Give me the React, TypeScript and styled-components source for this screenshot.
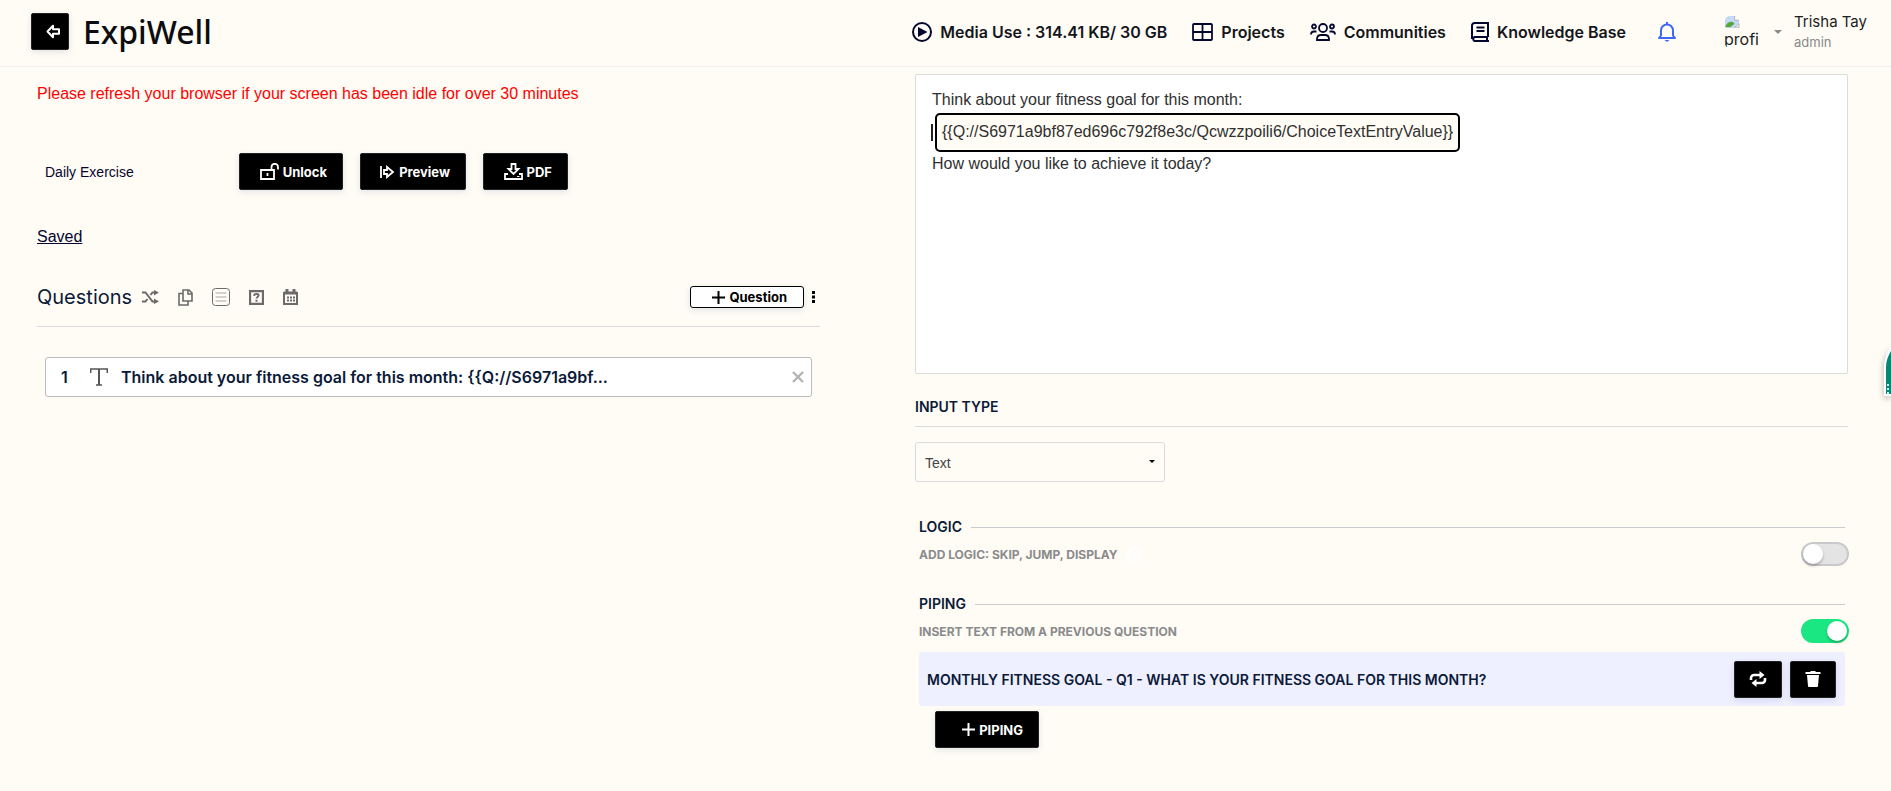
import React, { useState } from "react";
import styled, { createGlobalStyle } from "styled-components";

const sans = `Inter, "Liberation Sans", sans-serif`;
const arial = `"Liberation Sans", Arial, sans-serif`;
const navy = "#0b1a38";
const cream = "#fffcf5";
const line = "#d9dbdd";

const GlobalStyle = createGlobalStyle`
  * { box-sizing: border-box; }
  body { margin: 0; background: ${cream}; color: ${navy}; font-family: ${sans}; }
  button, select, input { font: inherit; }
  p, h1, h2, ol { margin: 0; padding: 0; }
`;

const Header = styled.header`
  display: flex;
  align-items: center;
  justify-content: space-between;
  height: 67px;
  padding: 0 24px 3px 31px;
  border-bottom: 1px solid #f1f1f4;
`;

const Brand = styled.div`
  display: flex;
  align-items: center;
  gap: 14px;
`;

const Logo = styled.h1`
  color: #0b0d10;
  font: 500 32px/36px "Noto Sans", "Open Sans", sans-serif;
`;

const DarkButton = styled.button<{ $width?: number }>`
  display: inline-flex;
  align-items: center;
  justify-content: flex-end;
  gap: 4px;
  width: ${(p) => (p.$width ? `${p.$width}px` : "auto")};
  height: 37px;
  padding: 0 15px;
  border: 1px solid #222;
  border-radius: 2px;
  background: #000;
  color: #fff;
  font-size: 13px;
  font-weight: 700;
  white-space: nowrap;
  box-shadow: 0 2px 6px rgba(60, 80, 140, 0.14);
  cursor: pointer;
`;

const BackButton = styled(DarkButton)`
  width: 38px;
  padding: 0 7px;
`;

const SquareButton = styled(DarkButton)`
  justify-content: center;
  padding: 0;
`;

const Nav = styled.nav`
  display: flex;
  align-items: center;
  gap: 25px;
`;

const NavLink = styled.a`
  display: flex;
  align-items: center;
  gap: 8px;
  color: #14161c;
  font-size: 16px;
  font-weight: 600;
  line-height: 20px;
  text-decoration: none;
  white-space: nowrap;

  svg { color: #04082e; }
`;

const BellButton = styled.button`
  display: flex;
  padding: 0;
  margin: 0 23px 0 7px;
  border: 0;
  background: none;
  color: #3f66fb;
  cursor: pointer;
`;

const Profile = styled.button`
  display: flex;
  align-items: center;
  gap: 12px;
  padding: 0;
  border: 0;
  background: none;
  color: #1c1e22;
  text-align: left;
  cursor: pointer;
`;

const Avatar = styled.span`
  display: flex;
  flex-direction: column;
  width: 38px;
  height: 34px;
  overflow: hidden;
  border-radius: 8px;
  font-size: 16px;
  line-height: 20px;
`;

const ProfileText = styled.span`
  display: flex;
  flex-direction: column;
  font-size: 15px;
  line-height: 20px;

  small { color: #888a8c; font-size: 13px; }
`;

const Main = styled.main`
  display: grid;
  grid-template-columns: minmax(0, 783fr) minmax(0, 933fr);
  column-gap: 95px;
  padding: 7px 43px 40px 37px;
`;

const Warning = styled.p`
  padding-top: 10px;
  color: #f00;
  font: 16px/20px ${arial};
`;

const Actions = styled.div`
  display: flex;
  align-items: center;
  gap: 17px;
  margin-top: 49px;
  padding-left: 8px;
`;

const SurveyName = styled.span`
  width: 177px;
  color: #05052e;
  font: 14px/18px ${arial};
`;

const Saved = styled.a`
  display: inline-block;
  margin-top: 37px;
  color: #05052e;
  font: 16px/20px ${arial};
`;

const QuestionsBar = styled.div`
  display: flex;
  align-items: center;
  margin-top: 33px;
  padding: 0 4px 12px 0;
  border-bottom: 1px solid ${line};
`;

const Heading = styled.h2`
  margin-right: 10px;
  font-size: 20px;
  font-weight: 400;
  line-height: 34px;
`;

const ToolIcons = styled.div`
  display: flex;
  align-items: center;
  gap: 19px;
  margin-right: auto;
`;

const IconButton = styled.button<{ $color?: string }>`
  display: flex;
  padding: 0;
  border: 0;
  background: none;
  color: ${(p) => p.$color ?? "#6b6b6b"};
  cursor: pointer;
`;

const AddQuestion = styled.button`
  display: flex;
  align-items: center;
  justify-content: flex-end;
  gap: 4px;
  width: 114px;
  height: 22px;
  margin-right: 7px;
  padding: 0 16px;
  border: 1px solid #000;
  border-radius: 3px;
  background: #fff;
  color: #000;
  font-size: 13px;
  font-weight: 700;
  box-shadow: 0 2px 6px rgba(60, 80, 140, 0.14);
  cursor: pointer;
`;

const QuestionList = styled.ol`
  margin: 30px 8px 0;
  list-style: none;
`;

const QuestionItem = styled.li`
  display: flex;
  align-items: center;
  height: 40px;
  padding: 0 7px 0 15px;
  border: 1px solid #b9bbbf;
  border-radius: 3px;
  background: #fff;
  font-size: 16px;
  font-weight: 600;
`;

const QuestionNumber = styled.span`
  width: 29px;
`;

const QuestionTitle = styled.span`
  flex: 1;
  margin-left: 13px;
  overflow: hidden;
  white-space: nowrap;
`;

const Editor = styled.div`
  min-height: 300px;
  padding: 14px 16px;
  border: 1px solid ${line};
  border-radius: 2px;
  background: #fff;
  color: #303030;
  font: 16px/22px ${arial};
  outline: 0;
`;

const TokenLine = styled.p`
  display: flex;
  align-items: center;
  gap: 2px;
  margin: 2px 0 1px -1px;
`;

const Caret = styled.span`
  width: 2px;
  height: 17px;
  background: #222;
`;

const Token = styled.span`
  overflow: hidden;
  padding: 6px 5px 7px;
  border: 2px solid #000;
  border-radius: 5px;
  background: ${cream};
`;

const InputTypeLabel = styled.label`
  display: block;
  padding: 22px 0 8px;
  border-bottom: 1px solid ${line};
  font-size: 14px;
  font-weight: 600;
  line-height: 22px;
`;

const SelectBox = styled.div`
  position: relative;
  width: 250px;
  margin: 15px 0 35px;

  svg { position: absolute; right: 10px; top: 18px; pointer-events: none; }
`;

const Select = styled.select`
  width: 100%;
  height: 40px;
  padding: 2px 9px 0;
  border: 1px solid ${line};
  border-radius: 3px;
  background: transparent;
  color: #444;
  font: 14px ${arial};
  appearance: none;
`;

const Section = styled.fieldset`
  min-width: 0;
  margin: 0 3px 28px 4px;
  padding: 0;
  border: 0;
`;

const SectionTitle = styled.h2`
  display: flex;
  align-items: center;
  gap: 9px;
  font-size: 14px;
  font-weight: 600;
  line-height: 20px;

  &::after { content: ""; flex: 1; height: 1px; background: #c9cbce; }
`;

const SectionRow = styled.div`
  display: flex;
  align-items: center;
  gap: 8px;
  height: 24px;
  margin: 5px -4px 0 0;
  color: #8a8b8c;
  font-size: 12px;
  font-weight: 700;
`;

const Toggle = styled.input`
  width: 48px;
  height: 24px;
  margin: 0 0 0 auto;
  border: 2px solid #c9c9c9;
  border-radius: 12px;
  background: #e4e4e4;
  appearance: none;
  cursor: pointer;

  &::before {
    content: "";
    display: block;
    width: 20px;
    height: 20px;
    border-radius: 50%;
    background: #fff;
    box-shadow: 0 2px 3px rgba(0, 0, 0, 0.25);
  }
  &:checked { border-color: #1be782; background: #1be782; }
  &:checked::before { margin-left: 24px; }
`;

const PipeRow = styled.div`
  display: flex;
  align-items: center;
  gap: 8px;
  height: 54px;
  margin-top: 9px;
  padding: 0 9px 0 8px;
  border-radius: 3px;
  background: #eeefff;
  font-size: 14px;
  font-weight: 600;

  span { flex: 1; }
`;

const PipeFooter = styled.div`
  margin-top: 5px;
  padding-left: 16px;
`;

const SideTab = styled.button`
  position: fixed;
  right: 0;
  top: 346px;
  display: flex;
  padding: 0;
  border: 0;
  background: none;
  filter: drop-shadow(0 2px 3px rgba(0, 0, 0, 0.3));
  cursor: pointer;
`;

type IconProps = { w?: number; h?: number; box?: string; sw?: number; children: React.ReactNode };
const Icon = ({ w = 20, h = w, box = "0 0 20 20", sw = 2, children }: IconProps) => (
  <svg width={w} height={h} viewBox={box} fill="none" stroke="currentColor" strokeWidth={sw} aria-hidden="true">
    {children}
  </svg>
);

const BackIcon = () => (
  <Icon w={15} box="0 0 15 15">
    <path d="M1.5 7.5 7 1.8v3.4h6v4.6H7v3.4z" strokeLinejoin="round" />
  </Icon>
);
const UnlockIcon = () => (
  <Icon w={19} h={17} box="0 0 19 17" sw={1.8}>
    <path d="M1 7h13v9H1zM11.500 7V4a3 3 0 0 1 6.500 0v2.500M7.500 10v3" />
  </Icon>
);
const PreviewIcon = () => (
  <Icon w={15} h={14} box="0 0 15 14" sw={1.8}>
    <path d="M1 1v12M4 5v4h3v3l6-5-6-5v3z" />
  </Icon>
);
const DownloadIcon = () => (
  <Icon w={19} h={17} box="0 0 19 17" sw={1.8}>
    <path d="M7.500 1h4v5h3l-5 5-5-5h3zM4 11H1v5h17v-5h-3" />
    <path d="M13 13.500h2.500" strokeWidth={1} />
  </Icon>
);
const PlusIcon = () => (
  <Icon w={13} box="0 0 13 13">
    <path d="M6.500 0v13M0 6.500h13" />
  </Icon>
);
const PlayIcon = () => (
  <Icon w={20}>
    <circle cx="10" cy="10" r="9" />
    <path d="m6 5 9.500 5L6 15z" fill="currentColor" stroke="none" />
  </Icon>
);
const GridIcon = () => (
  <Icon w={21} h={18} box="0 0 21 18" sw={1.8}>
    <rect x="1" y="1" width="19" height="16" rx="1" />
    <path d="M10.500 1v16M1 9h19" />
  </Icon>
);
const PeopleIcon = () => (
  <Icon w={26} h={18} box="0 0 26 18" sw={1.8}>
    <circle cx="13" cy="5" r="4" />
    <circle cx="4" cy="3.500" r="2" />
    <circle cx="22" cy="3.500" r="2" />
    <path d="M7 17v-1.500a4 4 0 0 1 4-3.500h4a4 4 0 0 1 4 3.500V17zM1 11.500C1 9.500 2 8.500 4 8.500h2.500M25 11.500c0-2-1-3-3-3h-2.500" />
  </Icon>
);
const BookIcon = () => (
  <Icon w={18} h={20} box="0 0 18 20">
    <path d="M17 15H3.500a2.200 2.200 0 0 0 0 4H18M1 17V3.500A2.500 2.500 0 0 1 3.500 1H17v14M16 15v4M5.500 5.500h8M5.500 9h8" />
  </Icon>
);
const BellIcon = () => (
  <Icon w={18} h={20} box="0 0 18 20">
    <path d="M1 16h16l-2-2.500V8.500a6 6 0 0 0-12 0v5zM9 0v3" strokeLinejoin="round" />
    <path d="M6.500 18h5L9 20z" fill="currentColor" stroke="none" />
  </Icon>
);
const BrokenImageIcon = () => (
  <svg width="16" height="16" viewBox="0 0 16 16" aria-hidden="true">
    <path d="M0 14V6a5 5 0 0 1 5-5h6l5 5v4l-6 5z" fill="#c6d9f8" />
    <path d="M0 14c2-5 5-7 9-6l2 2-5 4z" fill="#55a83c" />
    <path d="M11 1v5h5M16 10v4h-5z" fill="#fff" stroke="#a9a9a9" />
  </svg>
);
const CaretDown = ({ w = 8, color = "#8a8a8a" }: { w?: number; color?: string }) => (
  <svg width={w} height={w / 2} viewBox="0 0 8 4" aria-hidden="true">
    <path d="M0 0h8L4 4z" fill={color} />
  </svg>
);
const ShuffleIcon = () => (
  <Icon w={17} h={14} box="0 0 17 14">
    <path d="M0 2.500h3.500l7 9H13M0 11.500h3.500L5.500 9M8.500 5l2-2.500H13" />
    <path d="m12 0 5 2.500-5 3zM12 8.500l5 3-5 2.500z" fill="currentColor" stroke="none" />
  </Icon>
);
const CopyIcon = () => (
  <Icon w={15} h={17} box="0 0 15 17">
    <path d="M5 1h6l3 3v8H5zM10 1v4h4M5 4.500H1V16h9v-3.500" strokeWidth={1.6} />
  </Icon>
);
const ListIcon = () => (
  <Icon w={18} box="0 0 18 18" sw={1}>
    <rect x="0.500" y="0.500" width="17" height="17" rx="3" />
    <path d="M4 5h10M4 9h10M4 13h10" stroke="#a5a5a5" strokeLinecap="round" />
  </Icon>
);
const HelpIcon = () => (
  <Icon w={15} box="0 0 14 14">
    <path d="M1 1h12v12H1z" />
    <path d="M5 5.500V4.500c0-1 4-1.500 4 .5C9 6.500 7 6.500 7 8M7 9.200V11" strokeWidth={1.8} />
  </Icon>
);
const CalendarIcon = () => (
  <Icon w={15} h={16} box="0 0 15 16">
    <path d="M1 4v11h13V4z" />
    <path d="M1 4h13M4 0v4M11 0v4" strokeWidth={3} />
    <path d="M4 8.500h8M4 11.500h8" strokeDasharray="2 1" />
  </Icon>
);
const DotsIcon = () => (
  <svg width="5" height="12" viewBox="0 0 5 12" fill="currentColor" aria-hidden="true">
    <path d="M1 0h3v3H1zM1 4.500h3v3H1zM1 9h3v3H1z" />
  </svg>
);
const TextIcon = () => (
  <svg width="18" height="18" viewBox="0 0 18 18" fill="none" stroke="#555" aria-hidden="true">
    <path d="M.7 5V1h16.600v4M6 17h6" strokeWidth={1.500} />
    <path d="M9 1v16" strokeWidth={2} />
  </svg>
);
const CloseIcon = () => (
  <Icon w={12} box="0 0 12 12" sw={2.4}>
    <path d="m1 1 10 10M11 1 1 11" />
  </Icon>
);
const InfoIcon = () => (
  <svg width="16" height="16" viewBox="0 0 16 16" aria-hidden="true">
    <circle cx="8" cy="8" r="8" fill="#fffefc" />
    <path d="M6 6.500c0-2.500 4-2.500 4 0 0 1.500-2 1.500-2 3M8 11v1.500" fill="none" stroke="#fffbf2" strokeWidth="1.500" />
  </svg>
);
const SwapIcon = () => (
  <Icon w={18} h={16} box="0 0 18 16" sw={2.6}>
    <path d="M5.500 12H13a3 3 0 0 0 3-3V7M12.500 4H5a3 3 0 0 0-3 3v2" />
    <path d="m10.500 0 5 4-5 4zM7.500 8l-5 4 5 4z" fill="currentColor" stroke="none" />
  </Icon>
);
const TrashIcon = () => (
  <svg width="16" height="16" viewBox="0 0 16 16" fill="currentColor" aria-hidden="true">
    <path d="M.5 1H5l1-1h4l1 1h4.500v2H.5zM2 4h12l-1 11a1 1 0 0 1-1 1H4a1 1 0 0 1-1-1z" />
  </svg>
);
const TabShape = () => (
  <svg width="7" height="50" viewBox="0 0 7 50" aria-hidden="true">
    <path d="M7 1C3 6 0 13 0 21v29h7z" fill="#fff" />
    <path d="M7 5c-3 5-5 10-5 16v27h5z" fill="#078672" />
    <path d="M3 38h2v2H3zM3 42h2v2H3zM3 46h2v2H3z" fill="#d8f0ec" />
  </svg>
);

export default function App() {
  const [logic, setLogic] = useState(false);
  const [piping, setPiping] = useState(true);

  return (
    <>
      <GlobalStyle />
      <Header>
        <Brand>
          <BackButton aria-label="Back"><BackIcon /></BackButton>
          <Logo>ExpiWell</Logo>
        </Brand>
        <Nav>
          <NavLink href="#media"><PlayIcon />Media Use : 314.41 KB/ 30 GB</NavLink>
          <NavLink href="#projects"><GridIcon />Projects</NavLink>
          <NavLink href="#communities"><PeopleIcon />Communities</NavLink>
          <NavLink href="#knowledge"><BookIcon />Knowledge Base</NavLink>
          <BellButton aria-label="Notifications"><BellIcon /></BellButton>
          <Profile>
            <Avatar><BrokenImageIcon />profi</Avatar>
            <CaretDown />
            <ProfileText>Trisha Tay<small>admin</small></ProfileText>
          </Profile>
        </Nav>
      </Header>

      <Main>
        <section>
          <Warning>Please refresh your browser if your screen has been idle for over 30 minutes</Warning>
          <Actions>
            <SurveyName>Daily Exercise</SurveyName>
            <DarkButton $width={104}><UnlockIcon />Unlock</DarkButton>
            <DarkButton $width={106}><PreviewIcon />Preview</DarkButton>
            <DarkButton $width={85}><DownloadIcon />PDF</DarkButton>
          </Actions>
          <Saved href="#saved">Saved</Saved>
          <QuestionsBar>
            <Heading>Questions</Heading>
            <ToolIcons>
              <IconButton aria-label="Randomize"><ShuffleIcon /></IconButton>
              <IconButton aria-label="Copy"><CopyIcon /></IconButton>
              <IconButton aria-label="List"><ListIcon /></IconButton>
              <IconButton aria-label="Help"><HelpIcon /></IconButton>
              <IconButton aria-label="Schedule"><CalendarIcon /></IconButton>
            </ToolIcons>
            <AddQuestion><PlusIcon />Question</AddQuestion>
            <IconButton $color="#000" aria-label="More"><DotsIcon /></IconButton>
          </QuestionsBar>
          <QuestionList>
            <QuestionItem>
              <QuestionNumber>1</QuestionNumber>
              <TextIcon />
              <QuestionTitle>{"Think about your fitness goal for this month: {{Q://S6971a9bf..."}</QuestionTitle>
              <IconButton $color="#b3b3b3" aria-label="Delete question"><CloseIcon /></IconButton>
            </QuestionItem>
          </QuestionList>
        </section>

        <section>
          <Editor role="textbox" aria-multiline="true" aria-label="Question text" tabIndex={0}>
            <p>Think about your fitness goal for this month:</p>
            <TokenLine>
              <Caret />
              <Token>{"{{Q://S6971a9bf87ed696c792f8e3c/Qcwzzpoili6/ChoiceTextEntryValue}}"}</Token>
            </TokenLine>
            <p>How would you like to achieve it today?</p>
          </Editor>

          <InputTypeLabel htmlFor="input-type">INPUT TYPE</InputTypeLabel>
          <SelectBox>
            <Select id="input-type" defaultValue="Text">
              <option>Text</option>
              <option>Number</option>
            </Select>
            <CaretDown w={6} color="#000" />
          </SelectBox>

          <Section>
            <SectionTitle>LOGIC</SectionTitle>
            <SectionRow>
              <label htmlFor="logic">ADD LOGIC: SKIP, JUMP, DISPLAY</label>
              <InfoIcon />
              <Toggle id="logic" type="checkbox" checked={logic} onChange={() => setLogic(!logic)} />
            </SectionRow>
          </Section>

          <Section>
            <SectionTitle>PIPING</SectionTitle>
            <SectionRow>
              <label htmlFor="piping">INSERT TEXT FROM A PREVIOUS QUESTION</label>
              <Toggle id="piping" type="checkbox" checked={piping} onChange={() => setPiping(!piping)} />
            </SectionRow>
            <PipeRow>
              <span>MONTHLY FITNESS GOAL - Q1 - WHAT IS YOUR FITNESS GOAL FOR THIS MONTH?</span>
              <SquareButton $width={48} aria-label="Replace"><SwapIcon /></SquareButton>
              <SquareButton $width={46} aria-label="Delete piping"><TrashIcon /></SquareButton>
            </PipeRow>
            <PipeFooter>
              <DarkButton $width={104}><PlusIcon />PIPING</DarkButton>
            </PipeFooter>
          </Section>
        </section>
      </Main>
      <SideTab aria-label="Open side panel"><TabShape /></SideTab>
    </>
  );
}
